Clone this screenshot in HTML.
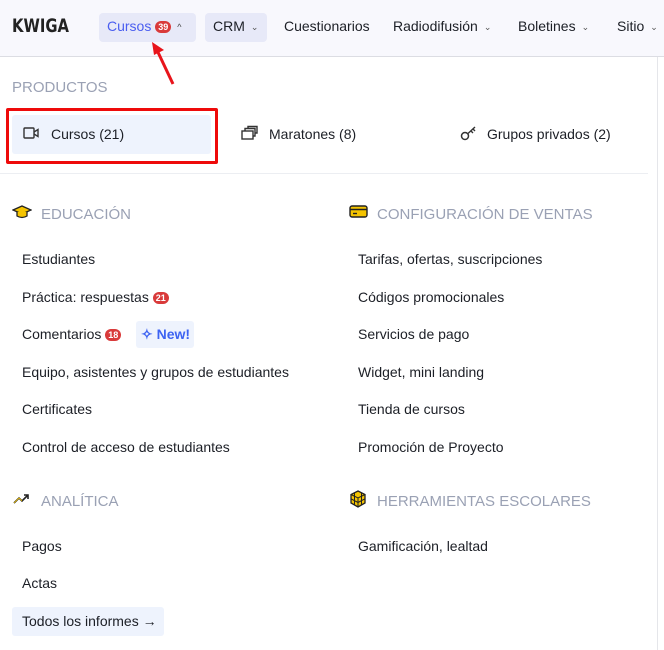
<!DOCTYPE html>
<html><head><meta charset="utf-8"><style>
*{margin:0;padding:0;box-sizing:border-box}
body{width:664px;height:650px;background:#fff;font-family:"Liberation Sans",sans-serif;color:#1c1f26;position:relative;overflow:hidden;font-size:14px}
.a{position:absolute;white-space:nowrap}
.hdr{position:absolute;left:0;top:0;width:664px;height:57px;background:#f8f8fd;border-bottom:1px solid #dcdde3}
.nav{top:18px;font-size:14px}
.pill{position:absolute;background:#e7e9f8;border-radius:4px}
.chev{font-size:9px;color:#555;margin-left:6px;position:relative;top:-1px}
.badge{display:inline-block;background:#d93a3a;color:#fff;font-size:9px;font-weight:bold;border-radius:7px;padding:1px 3px;line-height:10px;vertical-align:1px}
.sec{font-size:15px;color:#9aa1b4}
.it{font-size:14px}
</style></head><body>
<div class="hdr"></div>
<div class="a" style="left:12px;top:15px;font-size:19px;font-weight:bold;color:#222;transform:scaleX(0.78);transform-origin:0 0;font-family:'DejaVu Sans',sans-serif">KWIGA</div>
<div class="pill" style="left:99px;top:13px;width:97px;height:29px"></div>
<div class="a nav" style="left:107px;color:#4a5ef0">Cursos <span class="badge">39</span><span class="chev" style="color:#444">&#94;</span></div>
<div class="pill" style="left:205px;top:13px;width:62px;height:29px"></div>
<div class="a nav" style="left:213px">CRM<span class="chev">&#8964;</span></div>
<div class="a nav" style="left:284px">Cuestionarios</div>
<div class="a nav" style="left:393px">Radiodifusión<span class="chev">&#8964;</span></div>
<div class="a nav" style="left:518px">Boletines<span class="chev">&#8964;</span></div>
<div class="a nav" style="left:617px">Sitio<span class="chev">&#8964;</span></div>
<div class="a" style="left:657px;top:57px;width:1px;height:593px;background:#e5e6ea"></div>
<svg class="a" style="left:148px;top:38px" width="30" height="50"><line x1="25" y1="46" x2="8" y2="10" stroke="#e8141b" stroke-width="3"/><polygon points="4,4 16,12 6,17" fill="#e8141b"/></svg>

<div class="a sec" style="left:12px;top:79px">PRODUCTOS</div>
<div class="a" style="left:6px;top:108px;width:212px;height:56px;border:3px solid #ee0a0a;border-radius:2px"></div>
<div class="a" style="left:12px;top:115px;width:199px;height:39px;background:#eef3fd;border-radius:3px"></div>
<svg class="a" style="left:23px;top:127px" width="17" height="13"><rect x="1" y="1" width="10" height="10" rx="1" fill="none" stroke="#333" stroke-width="1.4"/><path d="M11 5 L15 2.5 V9.5 L11 7" fill="none" stroke="#333" stroke-width="1.4"/></svg>
<div class="a it" style="left:51px;top:126px">Cursos (21)</div>
<svg class="a" style="left:241px;top:125px" width="18" height="16"><rect x="1" y="6" width="11" height="8" fill="none" stroke="#333" stroke-width="1.4"/><path d="M4 6V3.5H14V11H12M7 3.5V1.5H16V8H14" fill="none" stroke="#333" stroke-width="1.4"/></svg>
<div class="a it" style="left:269px;top:126px">Maratones (8)</div>
<svg class="a" style="left:460px;top:125px" width="18" height="16"><circle cx="5" cy="11" r="3.5" fill="none" stroke="#333" stroke-width="1.5"/><path d="M8 8.5L15 2M11 6l2 2M13 4l2 2" stroke="#333" stroke-width="1.4" fill="none"/></svg>
<div class="a it" style="left:487px;top:126px">Grupos privados (2)</div>
<div class="a" style="left:0;top:173px;width:648px;height:1px;background:#eceef2"></div>

<svg class="a" style="left:12px;top:204px" width="20" height="16"><path d="M1 6L10 2L19 6L10 10Z" fill="#f5c400" stroke="#222" stroke-width="1.3"/><path d="M5 8V12Q10 15 15 12V8" fill="#f5c400" stroke="#222" stroke-width="1.3"/></svg>
<div class="a sec" style="left:41px;top:206px">EDUCACIÓN</div>
<div class="a it" style="left:22px;top:251px">Estudiantes</div>
<div class="a it" style="left:22px;top:289px">Práctica: respuestas <span class="badge">21</span></div>
<div class="a it" style="left:22px;top:326px">Comentarios <span class="badge">18</span></div>
<div class="a" style="left:136px;top:321px;width:58px;height:27px;background:#eef3fd;border-radius:3px"></div>
<div class="a" style="left:141px;top:326px;color:#3d63f2;font-weight:bold">&#10023; New!</div>
<div class="a it" style="left:22px;top:364px">Equipo, asistentes y grupos de estudiantes</div>
<div class="a it" style="left:22px;top:401px">Certificates</div>
<div class="a it" style="left:22px;top:439px">Control de acceso de estudiantes</div>

<svg class="a" style="left:12px;top:492px" width="20" height="14"><path d="M2 11L7 6L10 9L16 3M12 3H16V7" fill="none" stroke="#222" stroke-width="1.6"/><path d="M2 11L7 6L10 9" fill="none" stroke="#f5c400" stroke-width="0.8"/></svg>
<div class="a sec" style="left:41px;top:493px">ANALÍTICA</div>
<div class="a it" style="left:22px;top:538px">Pagos</div>
<div class="a it" style="left:22px;top:575px">Actas</div>
<div class="a" style="left:12px;top:607px;width:152px;height:29px;background:#eef3fd;border-radius:3px"></div>
<div class="a it" style="left:22px;top:613px">Todos los informes →</div>

<svg class="a" style="left:349px;top:205px" width="20" height="14"><rect x="1" y="1" width="17" height="11" rx="2" fill="#f5c400" stroke="#222" stroke-width="1.4"/><line x1="1" y1="4.5" x2="18" y2="4.5" stroke="#222" stroke-width="1.4"/><line x1="4" y1="8.5" x2="8" y2="8.5" stroke="#222" stroke-width="1.4"/></svg>
<div class="a sec" style="left:377px;top:206px">CONFIGURACIÓN DE VENTAS</div>
<div class="a it" style="left:358px;top:251px">Tarifas, ofertas, suscripciones</div>
<div class="a it" style="left:358px;top:289px">Códigos promocionales</div>
<div class="a it" style="left:358px;top:326px">Servicios de pago</div>
<div class="a it" style="left:358px;top:364px">Widget, mini landing</div>
<div class="a it" style="left:358px;top:401px">Tienda de cursos</div>
<div class="a it" style="left:358px;top:439px">Promoción de Proyecto</div>
<svg class="a" style="left:349px;top:490px" width="18" height="18"><path d="M9 1L16 4.5V13L9 17L2 13V4.5Z" fill="#f5c400" stroke="#222" stroke-width="1.3"/><path d="M2 4.5L9 8L16 4.5M9 8V17M2 8.8L9 12.5L16 8.8M5.5 2.8V15M12.5 2.8V15" fill="none" stroke="#222" stroke-width="1"/></svg>
<div class="a sec" style="left:377px;top:493px">HERRAMIENTAS ESCOLARES</div>
<div class="a it" style="left:358px;top:538px">Gamificación, lealtad</div>
</body></html>
